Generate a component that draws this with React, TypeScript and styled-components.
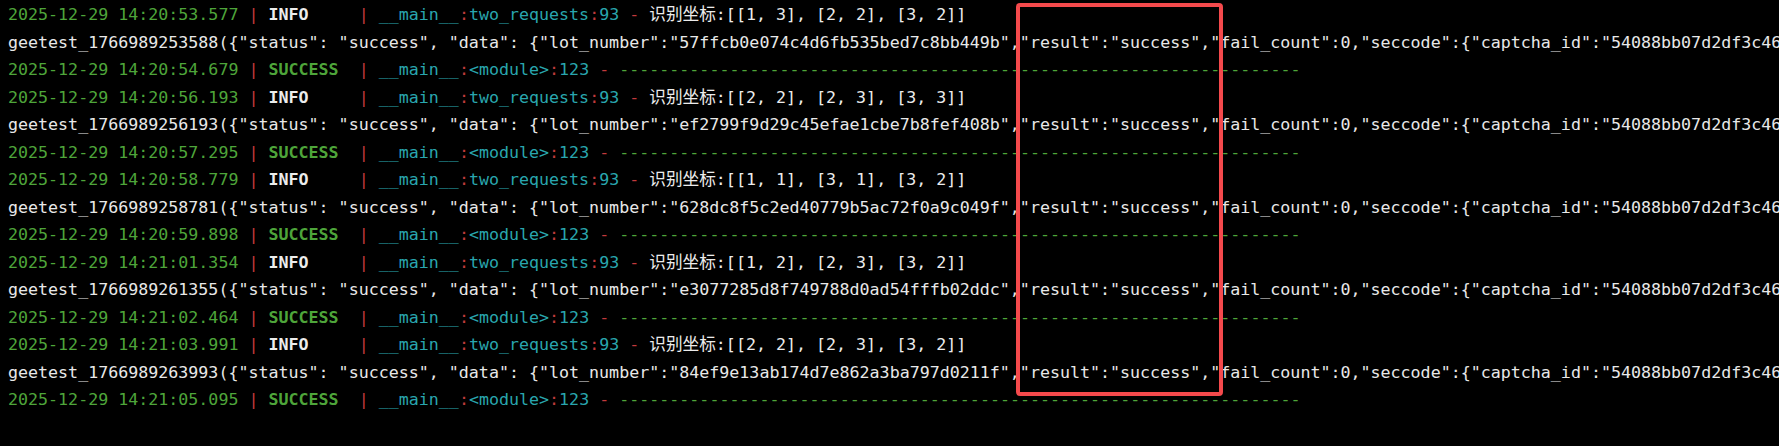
import React from "react";
import styled, { createGlobalStyle } from "styled-components";

const GlobalStyle = createGlobalStyle`
  html, body {
    margin: 0;
    padding: 0;
    background: #000000;
    overflow: hidden;
  }
`;

const Terminal = styled.div`
  position: relative;
  width: 1779px;
  height: 446px;
  box-sizing: border-box;
  padding: 1px 0 0 8px;
  background: #000000;
  overflow: hidden;
  font-family: "DejaVu Sans Mono", "Noto Sans CJK SC", monospace;
  font-size: 16.65px;
  line-height: 27.5px;
  color: #e6e6e6;
`;

const Line = styled.div`
  white-space: pre;
  height: 27.5px;
`;

type Tone = "green" | "red" | "cyan" | "white";

const toneColor: Record<Tone, string> = {
  green: "#4ea53a",
  red: "#c23a3c",
  cyan: "#29a6ae",
  white: "#ececec",
};

const Seg = styled.span<{ $tone: Tone; $bold?: boolean }>`
  color: ${(p) => toneColor[p.$tone]};
  font-weight: ${(p) => (p.$bold ? 700 : 400)};
`;

const Raw = styled.span`
  color: #e8e8e8;
`;

const Highlight = styled.div`
  position: absolute;
  left: 1016px;
  top: 3px;
  width: 207px;
  height: 393px;
  box-sizing: border-box;
  border: 4px solid #f4494c;
  border-radius: 4px;
  pointer-events: none;
`;

type Row =
  | { kind: "info"; ts: string; coords: string }
  | { kind: "raw"; id: string; lot: string }
  | { kind: "success"; ts: string };

const rows: Row[] = [
  { kind: "info", ts: "2025-12-29 14:20:53.577", coords: "[[1, 3], [2, 2], [3, 2]]" },
  { kind: "raw", id: "1766989253588", lot: "57ffcb0e074c4d6fb535bed7c8bb449b" },
  { kind: "success", ts: "2025-12-29 14:20:54.679" },
  { kind: "info", ts: "2025-12-29 14:20:56.193", coords: "[[2, 2], [2, 3], [3, 3]]" },
  { kind: "raw", id: "1766989256193", lot: "ef2799f9d29c45efae1cbe7b8fef408b" },
  { kind: "success", ts: "2025-12-29 14:20:57.295" },
  { kind: "info", ts: "2025-12-29 14:20:58.779", coords: "[[1, 1], [3, 1], [3, 2]]" },
  { kind: "raw", id: "1766989258781", lot: "628dc8f5c2ed40779b5ac72f0a9c049f" },
  { kind: "success", ts: "2025-12-29 14:20:59.898" },
  { kind: "info", ts: "2025-12-29 14:21:01.354", coords: "[[1, 2], [2, 3], [3, 2]]" },
  { kind: "raw", id: "1766989261355", lot: "e3077285d8f749788d0ad54fffb02ddc" },
  { kind: "success", ts: "2025-12-29 14:21:02.464" },
  { kind: "info", ts: "2025-12-29 14:21:03.991", coords: "[[2, 2], [2, 3], [3, 2]]" },
  { kind: "raw", id: "1766989263993", lot: "84ef9e13ab174d7e862a3ba797d0211f" },
  { kind: "success", ts: "2025-12-29 14:21:05.095" },
];

const DASHES = "-".repeat(68);

function LogLine({ row }: { row: Row }) {
  if (row.kind === "raw") {
    return (
      <Line>
        <Raw>
          {`geetest_${row.id}({"status": "success", "data": {"lot_number":"${row.lot}","result":"success","fail_count":0,"seccode":{"captcha_id":"54088bb07d2df3c46b79f80300b0abbe","lot_number":"${row.lot}","pass_token":"a1b2c3"}}})`}
        </Raw>
      </Line>
    );
  }
  const isInfo = row.kind === "info";
  return (
    <Line>
      <Seg $tone="green">{row.ts}</Seg>
      <Seg $tone="red">{" | "}</Seg>
      {isInfo ? (
        <Seg $tone="white" $bold>{"INFO    "}</Seg>
      ) : (
        <Seg $tone="green" $bold>{"SUCCESS "}</Seg>
      )}
      <Seg $tone="red">{" | "}</Seg>
      <Seg $tone="cyan">__main__</Seg>
      <Seg $tone="red">:</Seg>
      <Seg $tone="cyan">{isInfo ? "two_requests" : "<module>"}</Seg>
      <Seg $tone="red">:</Seg>
      <Seg $tone="cyan">{isInfo ? "93" : "123"}</Seg>
      <Seg $tone="red">{" - "}</Seg>
      {isInfo ? (
        <Seg $tone="white">{`识别坐标:${row.coords}`}</Seg>
      ) : (
        <Seg $tone="green">{DASHES}</Seg>
      )}
    </Line>
  );
}

export default function App() {
  return (
    <>
      <GlobalStyle />
      <Terminal>
        {rows.map((row, i) => (
          <LogLine key={i} row={row} />
        ))}
        <Highlight />
      </Terminal>
    </>
  );
}
